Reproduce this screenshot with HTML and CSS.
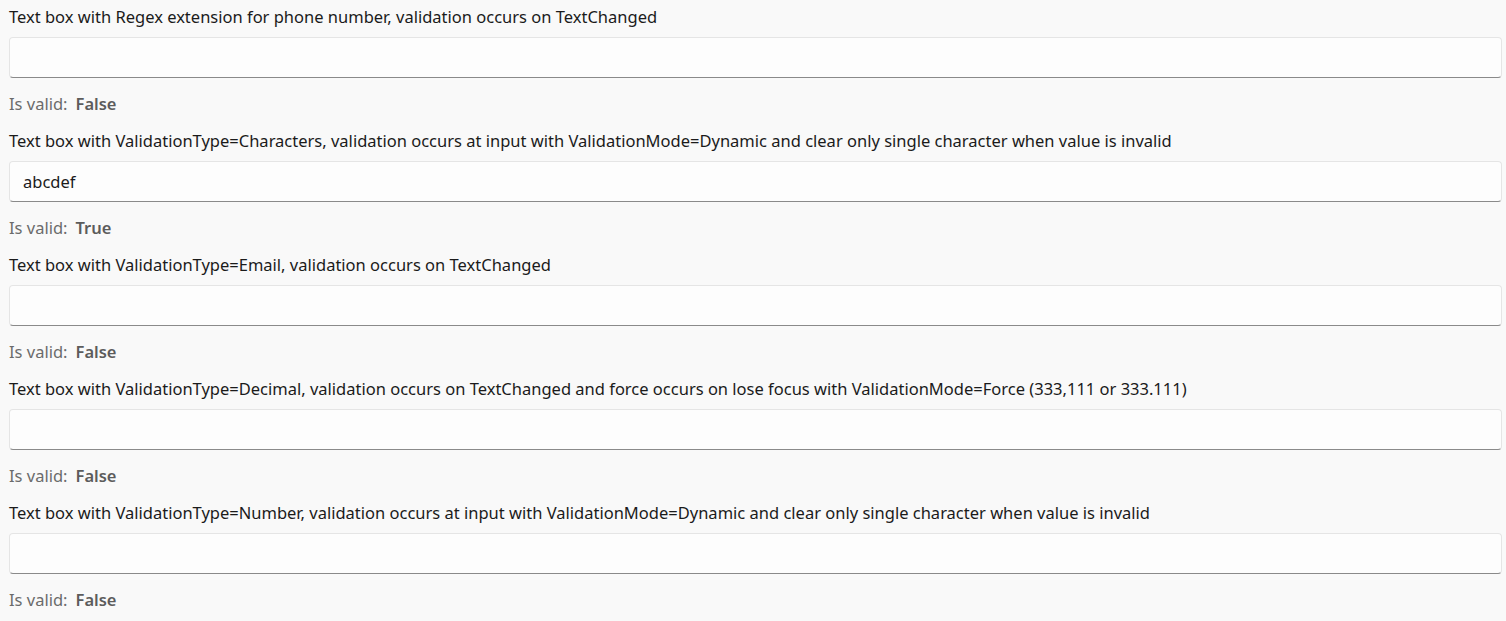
FILE: index.html
```html
<!DOCTYPE html>
<html>
<head>
<meta charset="utf-8">
<link rel="stylesheet" href="styles.css">
</head>
<body>
<div class="page">
  <section class="item">
    <div class="label">Text box with Regex extension for phone number, validation occurs on TextChanged</div>
    <div class="box"></div>
    <div class="valid"><span class="k">Is valid:</span><span class="v">False</span></div>
  </section>
  <section class="item">
    <div class="label">Text box with ValidationType=Characters, validation occurs at input with ValidationMode=Dynamic and clear only single character when value is invalid</div>
    <div class="box">abcdef</div>
    <div class="valid"><span class="k">Is valid:</span><span class="v">True</span></div>
  </section>
  <section class="item">
    <div class="label">Text box with ValidationType=Email, validation occurs on TextChanged</div>
    <div class="box"></div>
    <div class="valid"><span class="k">Is valid:</span><span class="v">False</span></div>
  </section>
  <section class="item">
    <div class="label">Text box with ValidationType=Decimal, validation occurs on TextChanged and force occurs on lose focus with ValidationMode=Force (333,111 or 333.111)</div>
    <div class="box"></div>
    <div class="valid"><span class="k">Is valid:</span><span class="v">False</span></div>
  </section>
  <section class="item">
    <div class="label">Text box with ValidationType=Number, validation occurs at input with ValidationMode=Dynamic and clear only single character when value is invalid</div>
    <div class="box"></div>
    <div class="valid"><span class="k">Is valid:</span><span class="v">False</span></div>
  </section>
</div>
</body>
</html>
```
FILE: styles.css
```css
html, body {
  margin: 0;
  padding: 0;
  background: #f9f9f9;
}
body {
  font-family: "Noto Sans", "Open Sans", sans-serif;
  font-size: 16.5px;
  color: #1b1b1b;
}
.page {
  padding: 7px 4px 0 9px;
}
.item {
  display: flex;
  flex-direction: column;
}
.label {
  height: 20px;
  line-height: 20px;
  white-space: nowrap;
  margin-bottom: 10px;
}
.box {
  box-sizing: border-box;
  height: 41px;
  background: #fdfdfd;
  border: 1px solid #e5e5e5;
  border-bottom: 1px solid #8a8a8a;
  border-radius: 4px;
  padding: 0 13px;
  line-height: 39px;
  margin-bottom: 16px;
}
.valid {
  height: 20px;
  line-height: 20px;
  color: #6b6b6b;
  margin-bottom: 17px;
  display: flex;
  gap: 8px;
}
.valid .v {
  font-weight: 600;
  color: #5c5c5c;
}
```
